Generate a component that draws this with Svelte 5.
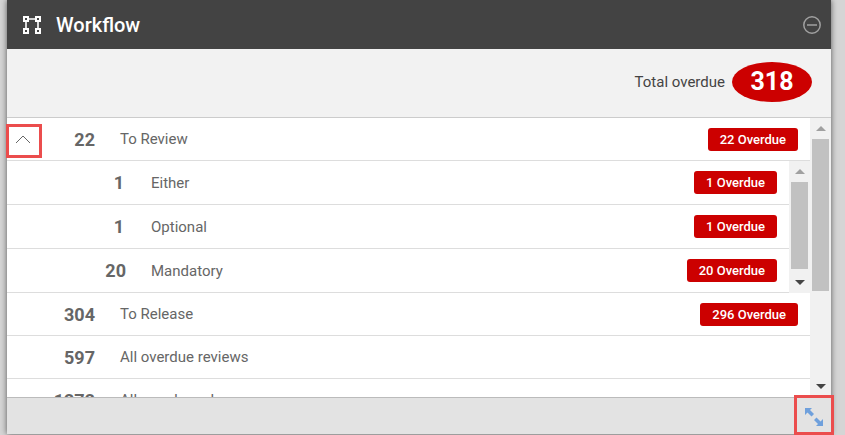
<script>
    let expanded = $state(true);

    const groups = [
        {
            count: 22,
            label: 'To Review',
            overdue: 22,
            children: [
                { count: 1, label: 'Either', overdue: 1 },
                { count: 1, label: 'Optional', overdue: 1 },
                { count: 20, label: 'Mandatory', overdue: 20 }
            ]
        },
        { count: 304, label: 'To Release', overdue: 296 },
        { count: 597, label: 'All overdue reviews' },
        { count: 1272, label: 'All overdue releases' }
    ];
</script>

{#snippet scrollbar(size)}
    <div class="scrollbar" aria-hidden="true">
        <svg class="arrow up" viewBox="0 0 10 5"><path d="M0 5 5 0l5 5z" /></svg>
        <div class="track"><div class="thumb" style="height: {size}%"></div></div>
        <svg class="arrow" viewBox="0 0 10 5"><path d="M0 0h10L5 5z" /></svg>
    </div>
{/snippet}

<div class="page">
    <section class="panel">
        <header class="header">
            <svg class="logo" viewBox="0 0 18 18" aria-hidden="true">
                <path d="M1 1h4v4H1zM13 1h4v4h-4zM1 13h4v4H1zM13 13h4v4h-4z" />
                <path class="link" d="M5 3h8M3 5v8M15 5v8" />
            </svg>
            <h1>Workflow</h1>
            <button class="collapse" aria-label="Collapse panel">
                <svg viewBox="0 0 18 18"><circle cx="9" cy="9" r="8.2" /><path d="M4 9h10" /></svg>
            </button>
        </header>

        <div class="summary">
            <span>Total overdue</span>
            <strong class="total">318</strong>
        </div>

        <div class="body">
            <div class="list">
                {#each groups as group}
                    <div class="row">
                        {#if group.children}
                            <button
                                class="toggle"
                                aria-label="Toggle {group.label}"
                                aria-expanded={expanded}
                                onclick={() => (expanded = !expanded)}
                            >
                                <svg class:closed={!expanded} viewBox="0 0 16 9"><path d="M1 8l7-7 7 7" /></svg>
                            </button>
                        {/if}
                        <span class="count">{group.count}</span>
                        <span class="label">{group.label}</span>
                        {#if group.overdue}
                            <span class="badge">{group.overdue} Overdue</span>
                        {/if}
                    </div>
                    {#if group.children && expanded}
                        <div class="children">
                            <div class="child-list">
                                {#each group.children as child}
                                    <div class="row child">
                                        <span class="count" class:short={child.count < 10}>{child.count}</span>
                                        <span class="label">{child.label}</span>
                                        <span class="badge">{child.overdue} Overdue</span>
                                    </div>
                                {/each}
                            </div>
                            {@render scrollbar(97)}
                        </div>
                    {/if}
                {/each}
            </div>
            {@render scrollbar(64)}
        </div>

        <footer class="footer">
            <button class="resize" aria-label="Expand panel">
                <svg viewBox="0 0 18 18">
                    <path d="M0 0h7L5 2l4 4-2.5 2.5-4-4L0 7zM18 18h-7l2-2-4-4 2.5-2.5 4 4L18 11z" />
                </svg>
            </button>
        </footer>
    </section>
</div>

<style>
    :global(body) {
        background: #d5d5d5;
    }

    .page {
        box-sizing: border-box;
        height: 100vh;
        padding: 0 14px 1px 7px;
        font-family: Roboto, sans-serif;
        font-size: 15px;
        color: #666;
        overflow: hidden;
    }

    .panel {
        display: flex;
        flex-direction: column;
        height: 100%;
        background: #fff;
        box-shadow: 0 0 6px rgba(0, 0, 0, 0.6);
    }

    button {
        display: flex;
        align-items: center;
        justify-content: center;
        padding: 0;
        border: none;
        background: none;
        cursor: pointer;
    }

    .header {
        display: flex;
        align-items: center;
        flex: none;
        height: 49px;
        padding: 0 10px 0 16px;
        background: #434343;
        color: #fff;
    }

    .logo {
        width: 18px;
        height: 18px;
        fill: none;
        stroke: #fff;
        stroke-width: 2;
    }

    .logo .link {
        stroke-width: 1.6;
    }

    h1 {
        flex: 1;
        margin: 0 0 0 15px;
        font-size: 20px;
        font-weight: 500;
    }

    .collapse svg {
        width: 18px;
        height: 18px;
        fill: none;
        stroke: #a0a0a0;
        stroke-width: 1.5;
    }

    .summary {
        box-sizing: border-box;
        display: flex;
        align-items: center;
        justify-content: flex-end;
        flex: none;
        gap: 7px;
        height: 69px;
        padding: 0 19px 2px 0;
        border-bottom: 1px solid #ccc;
        background: #f2f2f2;
        color: #444;
    }

    .total {
        width: 80px;
        border-radius: 50%;
        background: #c00;
        color: #fff;
        font-size: 25px;
        line-height: 40px;
        text-align: center;
    }

    .body {
        display: flex;
        flex: 1;
        min-height: 0;
    }

    .list {
        flex: 1;
        overflow-y: clip;
    }

    .child-list {
        flex: 1;
    }

    .row {
        position: relative;
        box-sizing: border-box;
        display: flex;
        align-items: center;
        height: 43px;
        padding-right: 12px;
        border-bottom: 1px solid #ddd;
    }

    .row.child {
        height: 44px;
    }

    .count {
        width: 88px;
        margin-right: 25px;
        font-size: 18px;
        font-weight: 700;
        text-align: right;
    }

    .child .count {
        width: 119px;
    }

    .child .count.short {
        width: 117px;
        margin-right: 27px;
    }

    .label {
        flex: 1;
    }

    .badge {
        padding: 0 12px;
        border-radius: 3px;
        background: #c00;
        color: #fff;
        font-size: 13px;
        font-weight: 500;
        line-height: 23px;
    }

    /* Highlighted controls */
    .toggle,
    .resize {
        box-sizing: border-box;
        border: 3px solid #eb4d4d;
    }

    .toggle {
        position: absolute;
        left: -1px;
        top: 6px;
        width: 36px;
        height: 34px;
    }

    .toggle svg {
        width: 16px;
        height: 9px;
        margin: 0 2px 4px 0;
        fill: none;
        stroke: #666;
    }

    .toggle svg.closed {
        transform: rotate(180deg);
    }

    .children {
        display: flex;
    }

    .scrollbar {
        box-sizing: border-box;
        display: flex;
        flex-direction: column;
        align-items: center;
        flex: none;
        width: 21px;
        padding: 8px 2px;
        background: #f1f1f1;
    }

    .arrow {
        flex: none;
        width: 10px;
        height: 5px;
        fill: #444;
    }

    .arrow.up {
        fill: #a0a0a0;
    }

    .track {
        flex: 1;
        width: 100%;
        margin: 8px 0;
    }

    .thumb {
        background: #c1c1c1;
    }

    .footer {
        position: relative;
        box-sizing: border-box;
        flex: none;
        height: 37px;
        border-top: 1px solid #bbb;
        background: #e3e3e3;
    }

    .resize {
        position: absolute;
        right: -3px;
        top: -3px;
        width: 40px;
        height: 40px;
    }

    .resize svg {
        width: 18px;
        height: 18px;
        margin-top: 3px;
        fill: #6fa0dc;
    }
</style>
